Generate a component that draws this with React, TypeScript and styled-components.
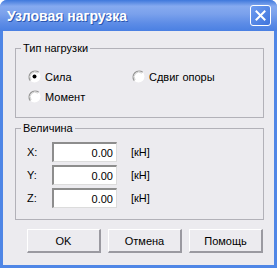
import styled, { createGlobalStyle } from "styled-components";

const GlobalStyle = createGlobalStyle`
  html, body {
    margin: 0;
    padding: 0;
    background: #ffffff;
  }
  body {
    font-family: "Liberation Sans", Arial, sans-serif;
    font-size: 11px;
    color: #000000;
  }
`;

const Window = styled.div`
  width: 277px;
  height: 268px;
  box-sizing: border-box;
  display: flex;
  flex-direction: column;
  background: #4f86e6;
  border-radius: 7px 7px 0 0;
  overflow: hidden;
`;

const TitleBar = styled.div`
  height: 31px;
  flex: none;
  display: flex;
  align-items: center;
  justify-content: space-between;
  padding: 0 6px 0 7px;
  background: linear-gradient(
    to bottom,
    #3f78dc 0%,
    #86aaf0 20%,
    #7aa1ec 45%,
    #5d8ce6 75%,
    #4a80e2 100%
  );
`;

const Title = styled.span`
  color: #ffffff;
  font-family: "Liberation Sans", Arial, sans-serif;
  font-weight: bold;
  font-size: 14px;
  text-shadow: 1px 1px 0 #2a56b0;
  padding-top: 1px;
`;

const CloseButton = styled.div`
  width: 19px;
  height: 19px;
  border: 1px solid #ffffff;
  border-radius: 3px;
  background: linear-gradient(135deg, #6e9cf0 0%, #3f74dc 100%);
  display: flex;
  align-items: center;
  justify-content: center;
`;

const Body = styled.div`
  flex: 1;
  margin: 0 3px 3px 3px;
  background: #ecebef;
  padding: 11px 10px 0 12px;
  display: flex;
  flex-direction: column;
`;

const Group = styled.fieldset<{ $height: number }>`
  margin: 0;
  padding: 0 0 0 0;
  border: 1px solid #b2b1b8;
  height: ${(p) => p.$height}px;
  box-sizing: border-box;
  position: relative;
  & + & {
    margin-top: 4px;
  }
`;

const Legend = styled.legend`
  padding: 0 2px;
  margin-left: 5px;
  font-size: 11px;
  line-height: 13px;
`;

const RadioGrid = styled.div`
  display: grid;
  grid-template-columns: 104px auto;
  row-gap: 7px;
  padding: 15px 0 0 12px;
`;

const RadioItem = styled.label`
  display: flex;
  align-items: center;
  gap: 4px;
  height: 13px;
  font-size: 11px;
`;

const FieldList = styled.div`
  display: flex;
  flex-direction: column;
  gap: 3px;
  padding: 7px 0 0 11px;
`;

const FieldRow = styled.div`
  display: flex;
  align-items: center;
  height: 20px;
`;

const AxisLabel = styled.span`
  width: 25px;
  font-size: 11px;
`;

const NumberBox = styled.div`
  width: 65px;
  height: 20px;
  box-sizing: border-box;
  background: #ffffff;
  border-top: 2px solid #8d8d8d;
  border-left: 2px solid #8d8d8d;
  border-bottom: 1px solid #dcdcdc;
  border-right: 1px solid #dcdcdc;
  display: flex;
  align-items: center;
  justify-content: flex-end;
  padding-right: 3px;
  font-size: 11px;
`;

const Unit = styled.span`
  margin-left: 14px;
  font-size: 11px;
`;

const ButtonRow = styled.div`
  display: flex;
  gap: 7px;
  padding: 9px 0 0 12px;
`;

const Button = styled.div`
  width: 74px;
  height: 24px;
  box-sizing: border-box;
  background: #ecebef;
  border-top: 1px solid #ffffff;
  border-left: 1px solid #ffffff;
  border-right: 2px solid #9a99a0;
  border-bottom: 2px solid #9a99a0;
  display: flex;
  align-items: center;
  justify-content: center;
  font-size: 11px;
`;

const Radio = ({ checked }: { checked?: boolean }) => (
  <svg width="13" height="13" viewBox="0 0 13 13">
    <circle cx="6.5" cy="6.5" r="6" fill="#ffffff" />
    <path d="M2.3 10.7 A6 6 0 0 1 10.7 2.3" fill="none" stroke="#9a9a9a" strokeWidth="1.4" />
    <path d="M3.2 9.8 A4.7 4.7 0 0 1 9.8 3.2" fill="none" stroke="#d2d2d2" strokeWidth="1" />
    {checked && <circle cx="6.5" cy="6.5" r="2" fill="#000000" />}
  </svg>
);

const CloseIcon = () => (
  <svg width="11" height="11" viewBox="0 0 11 11">
    <path d="M1.5 1.5 L9.5 9.5 M9.5 1.5 L1.5 9.5" stroke="#ffffff" strokeWidth="2" strokeLinecap="square" />
  </svg>
);

const fields = ["X:", "Y:", "Z:"];

export default function App() {
  return (
    <>
      <GlobalStyle />
      <Window>
        <TitleBar>
          <Title>Узловая нагрузка</Title>
          <CloseButton>
            <CloseIcon />
          </CloseButton>
        </TitleBar>
        <Body>
          <Group $height={76}>
            <Legend>Тип нагрузки</Legend>
            <RadioGrid>
              <RadioItem>
                <Radio checked />
                Сила
              </RadioItem>
              <RadioItem>
                <Radio />
                Сдвиг опоры
              </RadioItem>
              <RadioItem>
                <Radio />
                Момент
              </RadioItem>
            </RadioGrid>
          </Group>
          <Group $height={98}>
            <Legend>Величина</Legend>
            <FieldList>
              {fields.map((f) => (
                <FieldRow key={f}>
                  <AxisLabel>{f}</AxisLabel>
                  <NumberBox>0.00</NumberBox>
                  <Unit>[кН]</Unit>
                </FieldRow>
              ))}
            </FieldList>
          </Group>
          <ButtonRow>
            <Button>OK</Button>
            <Button>Отмена</Button>
            <Button>Помощь</Button>
          </ButtonRow>
        </Body>
      </Window>
    </>
  );
}
